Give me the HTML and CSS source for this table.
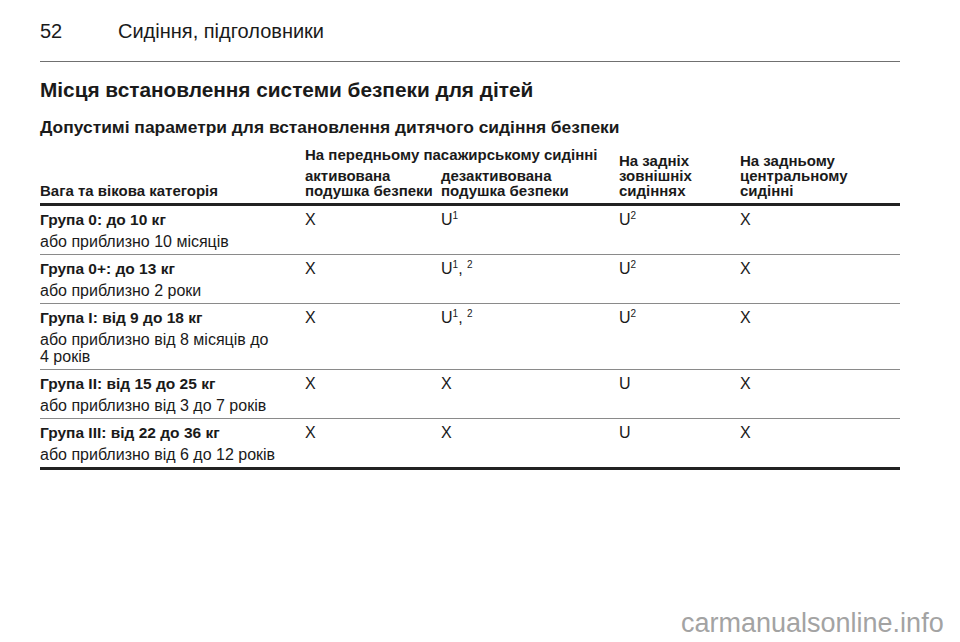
FILE: index.html
```html
<!DOCTYPE html>
<html lang="uk">
<head>
<meta charset="utf-8">
<title>Сидіння, підголовники</title>
<link rel="stylesheet" href="styles.css">
</head>
<body>
<div class="page">
  <header class="running">
    <span class="pnum">52</span>
    <span class="ptitle">Сидіння, підголовники</span>
  </header>
  <div class="rule"></div>
  <h1 class="h1">Місця встановлення системи безпеки для дітей</h1>
  <h2 class="h2">Допустимі параметри для встановлення дитячого сидіння безпеки</h2>

  <div class="table">
    <div class="thead">
      <div class="th th-cat">Вага та вікова категорія</div>
      <div class="th th-group">На передньому пасажирському сидінні</div>
      <div class="th th-a">активована<br>подушка безпеки</div>
      <div class="th th-b">дезактивована<br>подушка безпеки</div>
      <div class="th th-c">На задніх<br>зовнішніх<br>сидіннях</div>
      <div class="th th-d">На задньому<br>центральному<br>сидінні</div>
    </div>

    <div class="row">
      <div class="cell cat"><div class="grp">Група 0: до 10 кг</div><div class="age">або приблизно 10 місяців</div></div>
      <div class="cell">X</div>
      <div class="cell">U<sup>1</sup></div>
      <div class="cell">U<sup>2</sup></div>
      <div class="cell">X</div>
    </div>
    <div class="row">
      <div class="cell cat"><div class="grp">Група 0+: до 13 кг</div><div class="age">або приблизно 2 роки</div></div>
      <div class="cell">X</div>
      <div class="cell">U<sup>1</sup>, <sup>2</sup></div>
      <div class="cell">U<sup>2</sup></div>
      <div class="cell">X</div>
    </div>
    <div class="row">
      <div class="cell cat"><div class="grp">Група I: від 9 до 18 кг</div><div class="age">або приблизно від 8 місяців до<br>4 років</div></div>
      <div class="cell">X</div>
      <div class="cell">U<sup>1</sup>, <sup>2</sup></div>
      <div class="cell">U<sup>2</sup></div>
      <div class="cell">X</div>
    </div>
    <div class="row">
      <div class="cell cat"><div class="grp">Група II: від 15 до 25 кг</div><div class="age">або приблизно від 3 до 7 років</div></div>
      <div class="cell">X</div>
      <div class="cell">X</div>
      <div class="cell">U</div>
      <div class="cell">X</div>
    </div>
    <div class="row row-last">
      <div class="cell cat"><div class="grp">Група III: від 22 до 36 кг</div><div class="age">або приблизно від 6 до 12 років</div></div>
      <div class="cell">X</div>
      <div class="cell">X</div>
      <div class="cell">U</div>
      <div class="cell">X</div>
    </div>
  </div>
</div>
<div class="watermark">carmanualsonline.info</div>
</body>
</html>
```
FILE: styles.css
```css
html, body {
  margin: 0;
  padding: 0;
  background: #ffffff;
}
body {
  font-family: "Liberation Sans", Arial, sans-serif;
  color: #1a1a1a;
  width: 960px;
  height: 642px;
  position: relative;
  overflow: hidden;
}
.page {
  width: 860px;
  padding-left: 40px;
}
.running {
  display: flex;
  padding-top: 20px;
  font-size: 20px;
  line-height: 22px;
}
.pnum {
  width: 78px;
}
.rule {
  margin-top: 19px;
  height: 1px;
  background: #707070;
}
.h1 {
  margin: 15px 0 0;
  font-size: 20.8px;
  line-height: 26px;
  font-weight: bold;
}
.h2 {
  margin: 14px 0 0;
  font-size: 17.4px;
  line-height: 20px;
  font-weight: bold;
}
.table {
  margin-top: 10px;
}
.thead {
  display: grid;
  grid-template-columns: 265px 136px 178px 121px 160px;
  grid-template-rows: 15px 30px;
  row-gap: 6px;
  padding-bottom: 5px;
  border-bottom: 3px solid #222;
  font-size: 15px;
  line-height: 15px;
  font-weight: bold;
}
.th-cat { grid-column: 1; grid-row: 1 / 3; align-self: end; }
.th-group { grid-column: 2 / 4; grid-row: 1; white-space: nowrap; }
.th-a { grid-column: 2; grid-row: 2; white-space: nowrap; }
.th-b { grid-column: 3; grid-row: 2; white-space: nowrap; }
.th-c { grid-column: 4; grid-row: 1 / 3; align-self: end; }
.th-d { grid-column: 5; grid-row: 1 / 3; align-self: end; }

.row {
  display: grid;
  grid-template-columns: 265px 136px 178px 121px 160px;
  padding: 5px 0 4px;
  border-bottom: 1px solid #8a8a8a;
  font-size: 16px;
  line-height: 17px;
}
.row-last {
  border-bottom: 3px solid #222;
}
.grp {
  font-weight: bold;
  font-size: 15.5px;
}
.age {
  margin-top: 5px;
}
sup {
  font-size: 10px;
  line-height: 0;
  vertical-align: 6px;
}
.watermark {
  position: absolute;
  left: 681px;
  top: 608px;
  font-size: 27px;
  line-height: 30px;
  color: #a3a3a3;
  font-family: "Liberation Sans", Arial, sans-serif;
}
```
